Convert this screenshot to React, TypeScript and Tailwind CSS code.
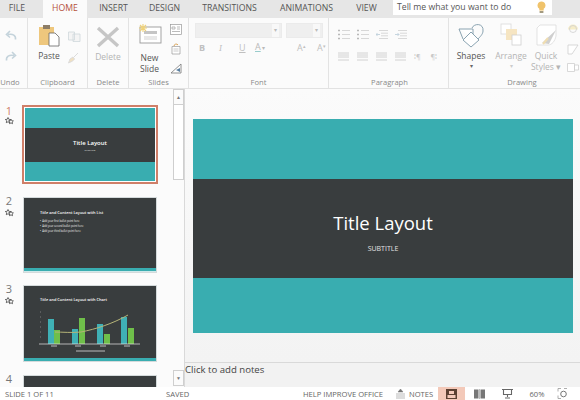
import React from "react";

const font = { fontFamily: '"Open Sans", "Noto Sans", sans-serif' };

function Tab({ label, w, active }: { label: string; w: string; active?: boolean }) {
  return (
    <div className={`${w} h-[18px] flex items-center justify-center text-[8.7px] ${active ? "bg-[#fbfbfb] text-[#b5523c]" : "text-[#555]"}`}>
      {label}
    </div>
  );
}

function Group({ w, label, labelClass = "", children, noSep }: { w: string; label: string; labelClass?: string; children?: React.ReactNode; noSep?: boolean }) {
  return (
    <div className={`${w} h-[70px] flex flex-col shrink-0 ${noSep ? "" : "border-r border-[#e3e3e3]"}`}>
      <div className="h-[58px] overflow-hidden">{children}</div>
      <div className={`h-[12px] text-center text-[7.6px] leading-[12px] text-[#8a8a8a] whitespace-nowrap ${labelClass}`}>{label}</div>
    </div>
  );
}

function Star() {
  return (
    <svg width="9" height="8" viewBox="0 0 9 8" className="block mt-px">
      <path d="M3 .5l.8 1.8 1.9.2-1.4 1.3.4 1.9L3 4.8 1.3 5.700l.4-1.900L.3 2.500l1.900-.2z" fill="none" stroke="#333" strokeWidth=".7" />
      <path d="M6 2.200l.7 1.500 1.700.2-1.200 1.100.3 1.700L6 5.900l-1.500.8.3-1.700-1.200-1.100 1.700-.2z" fill="#fff" stroke="#333" strokeWidth=".7" />
    </svg>
  );
}

function Lines({ color = "#c9c9c9" }: { color?: string }) {
  return (
    <svg width="11" height="9" viewBox="0 0 11 9">
      <path d="M0 1h11M0 3h11M0 5h11M0 8h11" stroke={color} strokeWidth=".8" />
    </svg>
  );
}

function BulletList() {
  return (
    <svg width="12" height="11" viewBox="0 0 12 11">
      <path d="M0 1.500h2M0 5.500h2M0 9.500h2" stroke="#b9b9b9" strokeWidth="1.400" />
      <path d="M4 1.500h8M4 5.500h8M4 9.500h8" stroke="#cfcfcf" strokeWidth=".8" />
    </svg>
  );
}

function Outdent({ flip }: { flip?: boolean }) {
  return (
    <svg width="12" height="11" viewBox="0 0 12 11">
      <path d="M3 1.500h9M5 4.200h7M5 6.800h7M3 9.500h9" stroke="#cfcfcf" strokeWidth=".8" />
      <path d={flip ? "M0 5.500h4M2.500 4l1.500 1.500L2.500 7" : "M0 5.500h4M1.500 4L0 5.500 1.500 7"} stroke="#b9ccd8" strokeWidth=".8" fill="none" />
    </svg>
  );
}

function Slide1Thumb() {
  return (
    <div className="w-[136px] h-[79px] -ml-px border-2 border-[#cf7f69] bg-white p-px shrink-0">
      <div className="h-[20px] bg-[#39adb0]" />
      <div className="h-[34px] bg-[#393d3e] flex flex-col items-center justify-center">
        <div className="text-[6px] leading-[9px] font-semibold text-white" style={font}>Title Layout</div>
        <div className="text-[2.500px] leading-[4px] text-[#ddd]" style={font}>SUBTITLE</div>
      </div>
      <div className="h-[19px] bg-[#39adb0]" />
    </div>
  );
}

function Slide2Thumb() {
  return (
    <div className="w-[134px] h-[76px] border border-[#d4dadb] bg-white flex flex-col shrink-0">
      <div className="flex-1 bg-[#393d3e] pl-[16px] pt-[12px] text-white" style={font}>
        <div className="text-[3.900px] leading-[6px] font-semibold whitespace-nowrap">Title and Content Layout with List</div>
        <div className="mt-[3px] text-[2.600px] leading-[5px] text-[#eee] whitespace-nowrap">
          <div>•&nbsp; Add your first bullet point here</div>
          <div>•&nbsp; Add your second bullet point here</div>
          <div>•&nbsp; Add your third bullet point here</div>
        </div>
      </div>
      <div className="h-[3px] bg-[#39adb0]" />
      <div className="h-px bg-[#cfe9ea]" />
    </div>
  );
}

function Slide3Thumb() {
  return (
    <div className="w-[134px] h-[77px] border border-[#d4dadb] bg-white flex flex-col shrink-0">
      <div className="flex-1 bg-[#393d3e] text-white min-h-0" style={font}>
        <div className="h-[17px] pl-[16px] pt-[11px] text-[3.900px] leading-[6px] font-semibold whitespace-nowrap">Title and Content Layout with Chart</div>
        <svg width="132" height="55" viewBox="0 0 132 55" className="block">
          <g fill="#3fb0b5">
            <rect x="24" y="16" width="6" height="25" />
            <rect x="48" y="26" width="6" height="15" />
            <rect x="73" y="21" width="6" height="20" />
            <rect x="97" y="14" width="6" height="27" />
          </g>
          <g fill="#6fbf4a">
            <rect x="30" y="27" width="6" height="14" />
            <rect x="55" y="15" width="6" height="26" />
            <rect x="80" y="31" width="6" height="10" />
            <rect x="104" y="25" width="6" height="16" />
          </g>
          <path d="M31 29C38 29 48 30 57 29C72 26 88 21 104 12" stroke="#b5b478" strokeWidth="1" fill="none" />
          <path d="M15 41H116" stroke="#e8e8e8" strokeWidth=".7" />
          <path d="M16 9h1M16 14h1M16 19h1M16 24h1M16 29h1M16 34h1" stroke="#aaa" strokeWidth=".6" />
          <path d="M27 43h6M51 43h6M76 43h6M100 43h6M52 48h29" stroke="#bbb" strokeWidth="1" />
        </svg>
      </div>
      <div className="h-[3px] bg-[#39adb0]" />
    </div>
  );
}

function SlideRow({ n, children, mt }: { n: number; children: React.ReactNode; mt: string }) {
  return (
    <div className={`flex ${mt} shrink-0`}>
      <div className="w-[23px] flex flex-col items-center pr-[5px] shrink-0">
        <div className={`text-[11px] leading-[14px] ${n === 1 ? "text-[#cf7f69] -mt-px mb-[-2px]" : "text-[#777] -mt-[3px]"}`}>{n}</div>
        {n < 4 && <Star />}
      </div>
      {children}
    </div>
  );
}

export default function App() {
  return (
    <div className="w-[580px] h-[400px] overflow-hidden flex flex-col bg-white text-[#555]" style={font}>
      {/* Tabs */}
      <div className="h-[18px] bg-[#e6e6e6] flex shrink-0">
        <Tab label="FILE" w="w-[43px] pr-[9px]" />
        <Tab label="HOME" w="w-[44px]" active />
        <Tab label="INSERT" w="w-[53px]" />
        <Tab label="DESIGN" w="w-[49px]" />
        <Tab label="TRANSITIONS" w="w-[81px]" />
        <Tab label="ANIMATIONS" w="w-[73px]" />
        <Tab label="VIEW" w="w-[47px]" />
        <div className="ml-[3px] w-[159px] h-[15px] bg-white flex items-center justify-between pl-[4px] pr-[3px] text-[8.700px] text-[#555]">
          <span>Tell me what you want to do</span>
          <svg width="9" height="13" viewBox="0 0 9 13" className="mr-[3px]">
            <path d="M4.500.5a4 4 0 0 1 2.200 7.300V9.500H2.300V7.800A4 4 0 0 1 4.500.5z" fill="#f0c36b" />
            <rect x="2.600" y="10" width="3.800" height="2" fill="#a39a80" />
          </svg>
        </div>
      </div>

      {/* Ribbon */}
      <div className="h-[71px] bg-[#fbfbfb] border-b border-[#e2e2e2] flex shrink-0">
        <Group w="w-[28px]" label="Undo" labelClass="pr-[7px]">
          <div className="flex flex-col items-start pl-[5px] pt-[12px] gap-[10px]">
            <svg width="12" height="11" viewBox="0 0 12 11"><path d="M10.500 9.500C11 5.500 8 3.500 3 4.500M5 1L1.500 4.500 5 7.500" fill="none" stroke="#c4d3db" strokeWidth="1.600" /></svg>
            <svg width="12" height="11" viewBox="0 0 12 11"><path d="M1.500 9.500C1 5.500 4 3.500 9 4.500M7 1l3.500 3.500L7 7.500" fill="none" stroke="#c4d3db" strokeWidth="1.600" /></svg>
          </div>
        </Group>
        <Group w="w-[60px]" label="Clipboard">
          <div className="flex pl-[9px] pt-[6px]">
            <div className="flex flex-col items-center w-[24px]">
              <svg width="22" height="23" viewBox="0 0 22 23">
                <rect x="1" y="3" width="15" height="18" fill="#eec77d" />
                <rect x="5" y="1" width="7" height="4" fill="#8d7d66" />
                <path d="M11 9h6l4 4v9H11z" fill="#fff" stroke="#666" strokeWidth=".8" />
              </svg>
              <div className="text-[8.500px] leading-[12px] mt-[3px] text-[#555]">Paste</div>
            </div>
            <div className="flex flex-col ml-[7px] pt-[6px] gap-[10px]">
              <svg width="13" height="12" viewBox="0 0 13 12"><path d="M.5 2h6v8h-6zM5 4h7v7.500H5z" fill="#f4f4f4" stroke="#cfd8dc" strokeWidth=".8" /></svg>
              <svg width="11" height="12" viewBox="0 0 11 12"><path d="M6 5l4-4M.5 11c2-1 5-2 6-4L5 5 2 7z" fill="#f1e0c0" stroke="#dcdcdc" strokeWidth="1" /></svg>
            </div>
          </div>
        </Group>
        <Group w="w-[41px]" label="Delete">
          <div className="flex flex-col items-center pt-[7px]">
            <svg width="24" height="24" viewBox="0 0 24 24"><path d="M2 3l20 18M22 3L2 21" stroke="#c6c6c6" strokeWidth="3.400" /></svg>
            <div className="text-[8.500px] leading-[12px] text-[#b4b4b4] mt-[2px]">Delete</div>
          </div>
        </Group>
        <Group w="w-[60px]" label="Slides">
          <div className="flex pl-[8px] pt-[5px]">
            <div className="flex flex-col items-center w-[25px]">
              <svg width="24" height="21" viewBox="0 0 24 21">
                <rect x="2" y="4" width="21" height="16" fill="#fff" stroke="#999" strokeWidth=".9" />
                <rect x="6" y="8" width="13" height="3" fill="#c5c5c5" />
                <path d="M6 14h13M6 16h13" stroke="#c5c5c5" strokeWidth=".8" />
                <path d="M5 1v8M1 5h8M2 2l6 6M8 2L2 8" stroke="#efd27a" strokeWidth="1.100" />
              </svg>
              <div className="text-[8.500px] leading-[11px] mt-[8px] text-center text-[#555]">New<br />Slide</div>
            </div>
            <div className="flex flex-col ml-[8px] gap-[8px] pt-[1px]">
              <svg width="12" height="11" viewBox="0 0 12 11"><rect x=".5" y=".5" width="11" height="10" fill="#fff" stroke="#999" strokeWidth=".7" /><path d="M2 3h3v2H2zM7 3h3M7 5h3M2 7.500h8" stroke="#aaa" strokeWidth=".8" fill="none" /></svg>
              <svg width="12" height="12" viewBox="0 0 12 12"><path d="M2 3.500h8v7.500H2z" fill="#fff" stroke="#999" strokeWidth=".7" /><path d="M4 3A2.200 2.200 0 0 1 8 2" fill="none" stroke="#dba458" strokeWidth="1" /><path d="M3.500 6h5M3.500 8h5" stroke="#b6b6b6" strokeWidth=".7" /></svg>
              <svg width="12" height="11" viewBox="0 0 12 11"><path d="M1 10L11 1v9z" fill="#fff" stroke="#777" strokeWidth=".8" /><path d="M6 7l4-2v4z" fill="#5a7fa0" /></svg>
            </div>
          </div>
        </Group>
        <Group w="w-[140px]" label="Font">
          <div className="flex flex-col pl-[6px] pt-[5px]">
            <div className="flex gap-[4px]">
              <div className="w-[87px] h-[15px] bg-[#efefef] border border-[#ebebeb] flex items-center justify-end pr-[2px] text-[6px] text-[#bbb]"><div className="w-[7px] h-full flex items-center justify-center bg-[#f8f8f8]">▾</div></div>
              <div className="w-[37px] h-[15px] bg-[#efefef] border border-[#ebebeb] flex items-center justify-end pr-[2px] text-[6px] text-[#bbb]"><div className="w-[7px] h-full flex items-center justify-center bg-[#f8f8f8]">▾</div></div>
            </div>
            <div className="flex items-center mt-[3px] text-[9px] leading-[12px] text-[#c0c0c0] pl-[4px]">
              <span className="w-[20px] font-bold">B</span>
              <span className="w-[20px] italic font-serif">I</span>
              <span className="w-[16px] underline">U</span>
              <span className="w-[42px] text-[#b9b9b9]"><span className="underline decoration-[#9cc]">A</span><span className="text-[6px] pl-[1px]">▾</span></span>
              <span className="w-[20px]">A<sup className="text-[5px]">▴</sup></span>
              <span>A<sup className="text-[5px]">▾</sup></span>
            </div>
          </div>
        </Group>
        <Group w="w-[120px]" label="Paragraph" labelClass="pl-[2px]">
          <div className="flex flex-col pl-[9px] pt-[11px] gap-[12px]">
            <div className="flex gap-[7px]">
              <BulletList />
              <BulletList />
              <Outdent />
              <Outdent flip />
            </div>
            <div className="flex gap-[8px] items-center">
              <Lines />
              <Lines />
              <Lines />
              <Lines />
              <span className="text-[7px] leading-[9px] text-[#c9c9c9] whitespace-nowrap">⁞¶</span>
              <span className="text-[7px] leading-[9px] text-[#c9c9c9] whitespace-nowrap pl-[2px]">¶⁞</span>
            </div>
          </div>
        </Group>
        <Group w="w-[132px]" label="Drawing" noSep labelClass="pl-[14px]">
          <div className="flex pl-[7px] pt-[5px]">
            <div className="flex flex-col items-center w-[30px]">
              <svg width="26" height="25" viewBox="0 0 26 25">
                <path d="M14 5C16 0 26 0 25 8C25 11 22 14 19 17" fill="none" stroke="#7d98a8" strokeWidth=".9" />
                <path d="M1 6h14v8" fill="#fff" stroke="#7d98a8" strokeWidth=".9" />
                <path d="M1 6l4 10" fill="none" stroke="#7d98a8" strokeWidth=".9" />
                <path d="M13 9l8 8-8 7-8-7z" fill="#fff" stroke="#7d98a8" strokeWidth=".9" />
              </svg>
              <div className="text-[8.500px] leading-[11px] mt-[2px] text-[#555]">Shapes</div>
              <div className="text-[6px] leading-[10px] text-[#666]">▾</div>
            </div>
            <div className="flex flex-col items-center w-[32px] ml-[9px]">
              <svg width="22" height="25" viewBox="0 0 22 25">
                <rect x="1" y="1" width="10" height="10" fill="#fff" stroke="#d9d9d9" strokeWidth=".8" />
                <rect x="6" y="6" width="11" height="11" fill="#f6e5c2" />
                <rect x="12" y="12" width="9" height="10" fill="#fff" stroke="#d0d0d0" strokeWidth=".8" />
              </svg>
              <div className="text-[8.500px] leading-[11px] mt-[2px] text-[#b4b4b4]">Arrange</div>
              <div className="text-[6px] leading-[10px] text-[#ccc]">▾</div>
            </div>
            <div className="flex flex-col items-center w-[30px] ml-[4px]">
              <svg width="24" height="25" viewBox="0 0 24 25">
                <path d="M6 2h16v11c-1 5-4 9-8 9H3V5z" fill="#fff" stroke="#dcdcdc" strokeWidth=".8" />
                <path d="M8 20l14-13-7 14z" fill="#cfcfcf" />
                <path d="M9 21l5-6" stroke="#f0ddb0" strokeWidth="2" />
              </svg>
              <div className="text-[8.500px] leading-[11px] mt-[2px] text-center text-[#b4b4b4] whitespace-nowrap">Quick<br />Styles ▾</div>
            </div>
            <div className="flex flex-col items-center ml-[6px] gap-[8px] pt-[1px]">
              <svg width="12" height="12" viewBox="0 0 12 12"><path d="M1 5.500a5 5 0 0 1 10 0z" fill="#f6edc8" /><circle cx="6" cy="5" r="3.500" fill="none" stroke="#cfcfcf" strokeWidth=".8" /></svg>
              <svg width="12" height="11" viewBox="0 0 12 11"><path d="M1 1h10L5 10H1z" fill="#fff" stroke="#cfcfcf" strokeWidth=".8" /></svg>
              <svg width="12" height="9" viewBox="0 0 12 9"><path d="M.5 .5h7v8h-7zM7.500 2h4v5h-4z" fill="#fff" stroke="#cfcfcf" strokeWidth=".8" /></svg>
            </div>
          </div>
        </Group>
      </div>

      {/* Main */}
      <div className="flex-1 min-h-0 flex">
        {/* Thumbnails */}
        <div className="w-[185px] shrink-0 bg-[#fbfbfb] border-r border-[#d9d9d9] flex overflow-hidden">
          <div className="w-[173px] shrink-0 flex flex-col pt-[16px]">
            <SlideRow n={1} mt=""><Slide1Thumb /></SlideRow>
            <SlideRow n={2} mt="mt-[13px]"><Slide2Thumb /></SlideRow>
            <SlideRow n={3} mt="mt-[12px]"><Slide3Thumb /></SlideRow>
            <SlideRow n={4} mt="mt-[13px]"><div className="w-[134px] h-[30px] border-t border-x border-[#d4dadb] bg-[#393d3e]" /></SlideRow>
          </div>
          <div className="w-[11px] shrink-0 flex flex-col justify-between pb-px">
            <div className="flex flex-col">
              <div className="h-[16px] border border-[#cfcfcf] bg-[#fbfbfb] flex items-center justify-center text-[5px] leading-none text-[#777]">▲</div>
              <div className="h-[75px] border-x border-b border-[#cfcfcf] bg-white" />
            </div>
            <div className="h-[16px] border border-[#cfcfcf] bg-[#fbfbfb] flex items-center justify-center text-[5px] leading-none text-[#777]">▼</div>
          </div>
        </div>

        {/* Editor */}
        <div className="flex-1 min-w-0 flex flex-col">
          <div className="flex-1 min-h-0 bg-gradient-to-b from-[#fbfbfb] to-[#f3f3f3] pl-[8px] pt-[30px]">
            <div className="w-[380px] h-[214px] flex flex-col">
              <div className="h-[60px] bg-[#39adb0]" />
              <div className="h-[99px] bg-[#393d3e] flex flex-col items-center pt-[32px]">
                <div className="text-[18.500px] leading-[24px] text-white">Title Layout</div>
                <div className="text-[7px] leading-[10px] mt-[9px] text-[#e3e3e3]">SUBTITLE</div>
              </div>
              <div className="flex-1 bg-[#39adb0]" />
            </div>
          </div>
          <div className="h-[25px] bg-[#f2f2f2] border-t border-[#d9d9d9] text-[9.600px] leading-[13px] text-[#444] shrink-0">Click to add notes</div>
        </div>
      </div>

      {/* Status bar */}
      <div className="h-[13px] bg-white flex items-center text-[7.600px] text-[#666] shrink-0 whitespace-nowrap">
        <div className="w-[166px] pl-[5px] pt-[2px]">SLIDE 1 OF 11</div>
        <div className="w-[137px] pt-[2px]">SAVED</div>
        <div className="w-[93px] pt-[2px]">HELP IMPROVE OFFICE</div>
        <svg width="9" height="10" viewBox="0 0 9 10" className="mr-[4px]"><path d="M4.500 0L7 3H2zM0 5h9M0 7h9M0 9h9" fill="#777" stroke="#777" strokeWidth=".5" /></svg>
        <div className="w-[29px] pt-[2px]">NOTES</div>
        <div className="w-[27px] h-[13px] bg-[#f3c9b9] flex items-center justify-center">
          <svg width="11" height="10" viewBox="0 0 11 10"><rect width="11" height="10" fill="#5b4032" /><rect x="1.500" y="6" width="8" height="3" fill="#f3c9b9" /><rect x="3" y="2" width="5" height="3" fill="#f3c9b9" /></svg>
        </div>
        <div className="w-[29px] flex justify-center">
          <svg width="11" height="10" viewBox="0 0 11 10"><path d="M0 .5h4.500v9H0zM6.500.5H11v9H6.500z" fill="#777" /><path d="M5.500 0v10" stroke="#777" strokeWidth=".5" /></svg>
        </div>
        <div className="w-[27px] flex justify-center">
          <svg width="11" height="10" viewBox="0 0 11 10"><path d="M0 .5h11M1.500 1v4.500h8V1M5.500 5.500V8M3 9h5" fill="none" stroke="#666" strokeWidth="1.100" /></svg>
        </div>
        <div className="w-[29px] text-center pl-[3px] pt-[2px]">60%</div>
        <svg width="11" height="11" viewBox="0 0 11 11" className="ml-[7px]"><path d="M1 3.500V.5h3M10 .5H7M1 7.500v3h3" fill="none" stroke="#999" strokeWidth=".8" /><circle cx="6.500" cy="6" r="2.800" fill="none" stroke="#777" strokeWidth="1" /></svg>
      </div>
    </div>
  );
}
